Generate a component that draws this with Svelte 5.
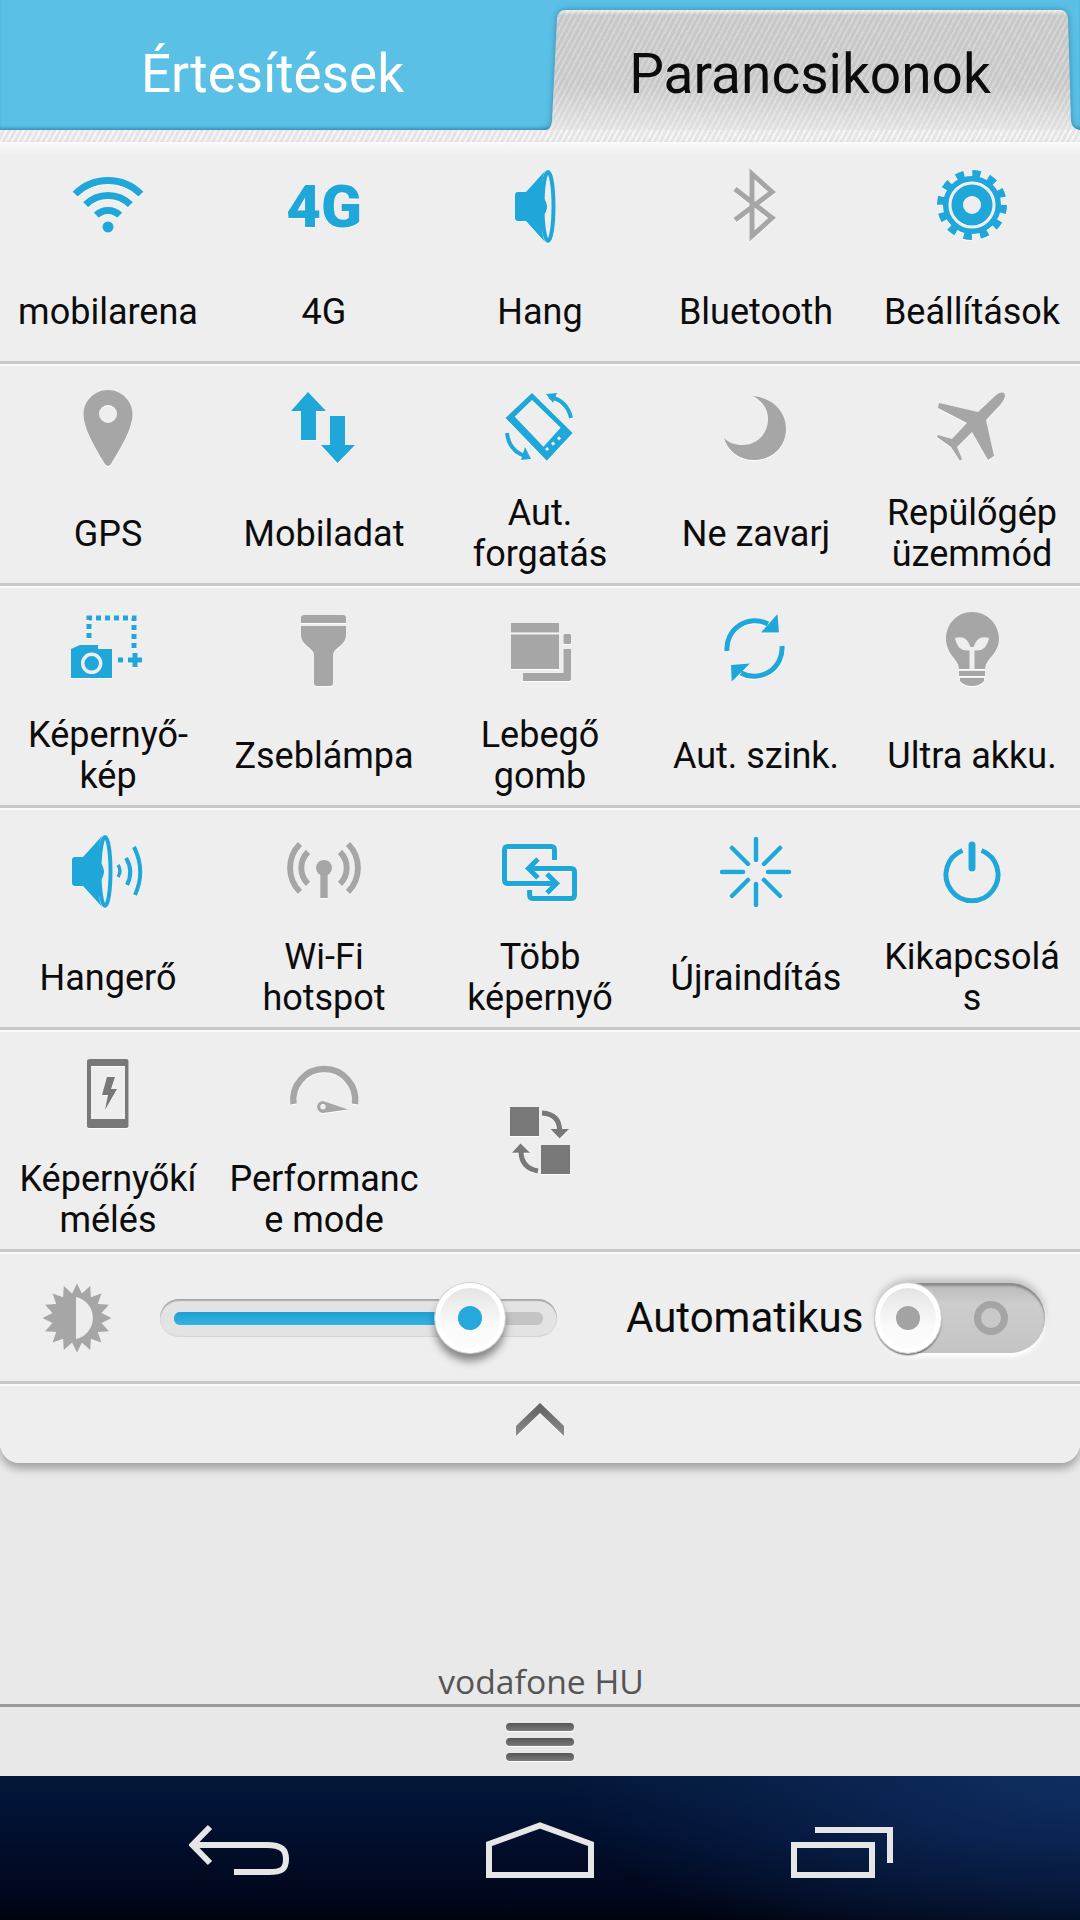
<script>
  // sun spikes for the brightness icon
  const sunPoints = Array.from({ length: 32 }, (_, i) => {
    const r = i % 2 ? 25 : 34.5;
    const a = (i * Math.PI) / 16 - Math.PI / 2;
    return `${(34 + r * Math.cos(a)).toFixed(1)},${(35 + r * Math.sin(a)).toFixed(1)}`;
  }).join(' ');

  const rows = [
    [
      { label: 'mobilarena', icon: wifi },
      { label: '4G', icon: fourG },
      { label: 'Hang', icon: sound },
      { label: 'Bluetooth', icon: bluetooth },
      { label: 'Beállítások', icon: gear }
    ],
    [
      { label: 'GPS', icon: pin },
      { label: 'Mobiladat', icon: data },
      { label: 'Aut.\nforgatás', icon: rotate },
      { label: 'Ne zavarj', icon: moon },
      { label: 'Repülőgép\nüzemmód', icon: plane }
    ],
    [
      { label: 'Képernyő-\nkép', icon: shot },
      { label: 'Zseblámpa', icon: torch },
      { label: 'Lebegő\ngomb', icon: floating },
      { label: 'Aut. szink.', icon: sync },
      { label: 'Ultra akku.', icon: bulb }
    ],
    [
      { label: 'Hangerő', icon: volume },
      { label: 'Wi-Fi\nhotspot', icon: hotspot },
      { label: 'Több\nképernyő', icon: multi },
      { label: 'Újraindítás', icon: restart },
      { label: 'Kikapcsolá\ns', icon: power }
    ],
    [
      { label: 'Képernyőkí\nmélés', icon: saver },
      { label: 'Performanc\ne mode', icon: gauge },
      { label: '', icon: swap }
    ]
  ];
</script>

{#snippet wifi()}
  <g class="sb" stroke-width="7">
    <path d="M7.1 29.1A46.5 46.5 0 0 1 72.9 29.1" />
    <path d="M17.7 39.7A31.5 31.5 0 0 1 62.3 39.7" />
    <path d="M28.3 50.3A16.5 16.5 0 0 1 51.7 50.3" />
  </g>
  <circle class="b" cx="40" cy="62" r="5.5" />
{/snippet}

{#snippet fourG()}
  <text class="b four" x="40" y="62" text-anchor="middle">4G</text>
{/snippet}

{#snippet speakerShape()}
  <path class="b" d="M18 27H26L45 6C41 15 42 28 43 32Q47 37 47 42Q47 47 43 51C42 60 41 68 45 77L26 56H18Q15 56 15 53V30Q15 27 18 27Z" />
  <ellipse class="sb" cx="48" cy="41.5" rx="5.5" ry="34.5" stroke-width="4" />
{/snippet}

{#snippet sound()}
  {@render speakerShape()}
{/snippet}

{#snippet bluetooth()}
  <path class="sg" stroke-width="5" d="M19 24L56 53L36 71V9L56 27L19 55" />
{/snippet}

{#snippet gear()}
  <g class="sb">
    <circle cx="40" cy="40" r="31.5" stroke-width="7" stroke-dasharray="8.25 8.25" />
    <circle cx="40" cy="40" r="26.3" stroke-width="5.5" />
    <circle cx="40" cy="40" r="14.75" stroke-width="11.5" />
  </g>
{/snippet}

{#snippet pin()}
  <path class="g" fill-rule="evenodd" d="M40 3C53.5 3 64.5 14 64.5 27.5C64.5 44 47 70 43 77Q40 81 37 77C33 70 15.5 44 15.5 27.5C15.5 14 26.5 3 40 3ZM40 18A9 9 0 1 0 40 36A9 9 0 1 0 40 18Z" />
{/snippet}

{#snippet data()}
  <path class="b" d="M24 5L42 24H32V53H17V24H7Z" />
  <path class="b" d="M46 29H61V58H71L53.5 76L37 58H46Z" />
{/snippet}

{#snippet rotate()}
  <path class="b" fill-rule="evenodd" d="M32 6L72.6 46L46.8 73.7L5.5 31ZM32 13L14.8 29.7L43.4 59.7L60.6 40.7Z" />
  <path class="dots" d="M46 63L64 47" stroke-width="3" stroke-dasharray="3 5" />
  <path class="sb" stroke-width="4" d="M49 10Q67 13 71 31" />
  <path class="b" d="M46 7L57 6L53 16Z" />
  <path class="sb" stroke-width="4" d="M7 46Q9 65 28 70" />
  <path class="b" d="M25 60L31 72L21 73Z" />
{/snippet}

{#snippet moon()}
  <path class="g" d="M37 9C56 11 70 24 70 42C70 60 56 73 38 73C24 73 12 65 8 51C13 56 20 58 26 58C41 58 52 47 52 32C52 22 46 14 37 9Z" />
{/snippet}

{#snippet plane()}
  <path class="g" d="M61 11Q68 4 72 6Q75 9 69 17L54 33L62 69L56 73L40 45L25 60L30 72L28 74L19 60L5 50L6 48L20 52L35 36L6 21L7 16L46 25Z" />
{/snippet}

{#snippet shot()}
  <path class="sb" stroke-width="5" stroke-dasharray="5 4" d="M21 29V9H66V41" />
  <path class="sb" stroke-width="5" d="M50 51H55M60 51H74M67 44V58" />
  <path class="b" d="M3 40L12 36H17L19 36H30V40H44V69H3Z" />
  <circle class="hole-ring" cx="23.7" cy="54.3" r="9" stroke-width="3.5" />
{/snippet}

{#snippet torch()}
  <path class="g" d="M17 14V9Q17 6 20 6H59Q62 6 62 9V14Z" />
  <path class="g" d="M17 17H62V26Q62 32 56 37Q49 42 49 46V74Q49 77 46 77H33Q30 77 30 74V46Q30 42 23 37Q17 32 17 26Z" />
{/snippet}

{#snippet floating()}
  <rect class="g" x="11" y="14" width="48" height="9.5" />
  <rect class="g" x="11" y="25.5" width="48" height="34.5" />
  <rect class="g" x="63.5" y="25" width="7.5" height="10" rx="1.5" />
  <path class="g" d="M63.5 40H71V70Q71 72 69 72H23V64H63.5Z" />
{/snippet}

{#snippet sync()}
  <path class="sb" stroke-width="5" d="M11 42A28 28 0 0 1 52 15" />
  <path class="b" d="M61.5 5L63 23.5L45 23.5Z" />
  <path class="sb" stroke-width="5" d="M66 37A28 28 0 0 1 25 64" />
  <path class="b" d="M15.7 72.7L15 56L34 54.5Z" />
{/snippet}

{#snippet bulb()}
  <path class="g" d="M40 3C55 3 67 15 67 30C67 40 60 47 56 52Q53 56 53 60H27Q27 56 24 52C20 47 14 40 14 30C14 15 25 3 40 3Z" />
  <rect class="g" x="27" y="62" width="26" height="5" />
  <path class="g" d="M28 69H52V72Q48 77 40 77Q32 77 28 72Z" />
  <path class="bgfill" d="M23 29Q36 25 39 41Q26 44 23 29Z" />
  <path class="bgfill" d="M57 29Q44 25 41 41Q54 44 57 29Z" />
  <rect class="bgfill" x="37.5" y="38" width="5" height="22" />
{/snippet}

{#snippet volume()}
  <g transform="translate(-11 -1)">{@render speakerShape()}</g>
  <g class="sb">
    <path stroke-width="3.5" d="M50 34Q54 40 50 46" />
    <path stroke-width="4" d="M58 27Q66 40 59 54" />
    <path stroke-width="4" d="M66 16Q78 40 67 64" />
  </g>
{/snippet}

{#snippet hotspot()}
  <g class="sg" stroke-width="6">
    <path d="M16 13A34 34 0 0 0 16 61" />
    <path d="M64 13A34 34 0 0 1 64 61" />
    <path d="M24 21A22.5 22.5 0 0 0 24 53" />
    <path d="M56 21A22.5 22.5 0 0 1 56 53" />
  </g>
  <circle class="g" cx="40" cy="37" r="8" />
  <rect class="g" x="36.3" y="40" width="7.4" height="27" />
{/snippet}

{#snippet multi()}
  <g class="sb" stroke-width="5">
    <path d="M54.5 29V19Q54.5 15.5 51 15.5H8Q4.5 15.5 4.5 19V49Q4.5 52.5 8 52.5H56" />
    <path d="M29.6 59V64Q29.6 67.5 33 67.5H71Q74.5 67.5 74.5 64V41Q74.5 37.5 71 37.5H30" />
    <path d="M38 28L28.5 37.5L38 47" />
    <path d="M47 43L56.5 52.5L47 62" />
  </g>
{/snippet}

{#snippet restart()}
  <g class="sb round" stroke-width="4.5">
    <path d="M40 8V29M40 53V74M6 41H27M52 41H73" />
    <path d="M16 17L32 33M64 17L48 33M16 65L32 49M64 65L48 49" />
  </g>
{/snippet}

{#snippet power()}
  <path class="sb" stroke-width="5" d="M30.5 19.5A26 26 0 1 0 49.5 19.5" />
  <path class="sb round" stroke-width="7" d="M40 14V37" />
{/snippet}

{#snippet saver()}
  <path class="d" fill-rule="evenodd" d="M22 6H58Q60.5 6 60.5 8V73Q60.5 75 58 75H22Q19 75 19 73V8Q19 6 22 6ZM23 13V66H57V13Z" />
  <path class="d" d="M39 24H47L43 36H49L37 57L40 42H34Z" />
{/snippet}

{#snippet gauge()}
  <path class="sg" stroke-width="6.5" d="M9.5 51A31 31 0 1 1 71 51" />
  <path class="g" fill-rule="evenodd" d="M39 48L64 56.5L39 60A6 6 0 0 1 39 48ZM39 51A2.7 2.7 0 1 0 39 56.4A2.7 2.7 0 1 0 39 51Z" />
{/snippet}

{#snippet swap()}
  <rect class="d" x="10" y="6" width="29" height="29" />
  <rect class="d" x="41" y="44" width="29" height="29" />
  <path class="sd" stroke-width="5" d="M42 12Q59 13 59.6 29" />
  <path class="d" d="M50.5 28H69L59.6 37.5Z" />
  <path class="sd" stroke-width="5" d="M21 50Q21 67 38 70" />
  <path class="d" d="M12 51.7H30L20.5 42.5Z" />
{/snippet}

<div class="page">
  <header class="tabs">
    <div class="tab tab-plain">Értesítések</div>
    <div class="tab-shadow">
      <div class="tab tab-active">Parancsikonok</div>
    </div>
  </header>
  <div class="tab-strip"></div>

  <section class="panel">
    {#each rows as row}
      <div class="row">
        {#each row as item}
          <div class="cell" class:only-icon={!item.label}>
            <svg class="ico" width="80" height="80" viewBox="0 0 80 80">{@render item.icon()}</svg>
            {#if item.label}
              <div class="label"><span>{item.label}</span></div>
            {/if}
          </div>
        {/each}
      </div>
    {/each}

    <div class="bright">
      <svg class="sun" width="68" height="70" viewBox="0 0 68 70">
        <polygon class="g" points={sunPoints} />
        <path class="bgfill" d="M33 14A21.5 21.5 0 0 1 33 56Z" />
      </svg>
      <div class="track">
        <div class="bar"><div class="bar-fill"></div></div>
        <div class="thumb slider-thumb"><span class="dot dot-blue"></span></div>
      </div>
      <div class="auto">Automatikus</div>
      <div class="toggle">
        <div class="thumb toggle-thumb"><span class="dot dot-gray"></span></div>
        <span class="ring"></span>
      </div>
    </div>

    <div class="expand">
      <svg class="ico" width="48" height="34" viewBox="0 0 48 34">
        <defs>
          <linearGradient id="chev" x1="0" y1="0" x2="0" y2="1">
            <stop offset="0" stop-color="#5f5f5f" />
            <stop offset="1" stop-color="#8c8c8c" />
          </linearGradient>
        </defs>
        <path fill="url(#chev)" d="M24 0L48 23V33L24 10L0 33V23Z" />
      </svg>
    </div>
  </section>

  <div class="carrier">vodafone HU</div>

  <div class="handle">
    <span></span>
    <span></span>
    <span></span>
  </div>

  <nav class="nav">
    <svg width="100" height="56" viewBox="0 0 100 56">
      <path d="M21 5L3.5 23L21 41M4 23H78C93 23 97 28 97 37C97 48 92 50 80 50H45" />
    </svg>
    <svg width="108" height="56" viewBox="0 0 108 56">
      <path d="M3 22L54 3.5L105 22V53H3Z" />
    </svg>
    <svg width="102" height="56" viewBox="0 0 102 56">
      <rect x="3" y="23" width="78" height="30" />
      <path d="M24 8H99V41" />
    </svg>
  </nav>
</div>

<style>
  :global(body) {
    margin: 0;
    background: #e9e9e9;
  }

  .page {
    width: 1080px;
    height: 1920px;
    display: flex;
    flex-direction: column;
    overflow: hidden;
    background: #e9e9e9;
    font-family: Roboto, "Noto Sans", sans-serif;
    color: #0c0c0c;
  }

  /* tabs */
  .tabs {
    display: flex;
    height: 130px;
    overflow: hidden;
    background: #5bc0e6;
    box-shadow: inset 0 -3px 3px -1px rgba(20, 110, 150, 0.55);
  }

  .tab {
    display: flex;
    align-items: center;
    justify-content: center;
  }

  .tab-plain {
    width: 545px;
    height: 130px;
    padding-top: 18px;
    box-sizing: border-box;
    font-size: 53px;
    color: #fff;
  }

  .tab-shadow {
    width: 535px;
    margin-top: 10px;
    height: 126px;
    filter: drop-shadow(0 0 3px rgba(20, 100, 140, 0.6));
  }

  .tab-active {
    height: 126px;
    padding: 2px 5px 0 0;
    box-sizing: border-box;
    font-size: 55px;
    clip-path: path("M0 120Q6 120 7 111L12 8Q13 0 21 0H515Q522 0 523 8L526 111Q527 119 535 120V126H0Z");
    background:
      repeating-linear-gradient(118deg, rgba(255, 255, 255, 0.16) 0 2px, rgba(0, 0, 0, 0.03) 2px 5px),
      linear-gradient(#f4f4f4 0, #cdcdcd 5px, #cfcfcf 60%, #ececec 100%);
  }

  .tab-strip {
    height: 12px;
    background:
      repeating-linear-gradient(118deg, rgba(255, 255, 255, 0.5) 0 2px, rgba(0, 0, 0, 0.03) 2px 5px),
      #ececec;
  }

  /* quick settings panel */
  .panel {
    padding-top: 2px;
    background: #fafafa;
    border-radius: 0 0 20px 20px;
    overflow: hidden;
    box-shadow: 0 6px 8px rgba(0, 0, 0, 0.3);
    position: relative;
  }

  .row {
    display: grid;
    grid-template-columns: repeat(5, 216px);
    height: 220px;
    box-sizing: border-box;
    margin-bottom: 2px;
    background: #eeeeee;
    border-bottom: 3px solid #c8c8c8;
  }

  .row:first-child {
    background: linear-gradient(#f8f8f8, #eeeeee 12px);
  }

  .cell {
    display: flex;
    flex-direction: column;
    align-items: center;
    padding-top: 21px;
  }

  .cell.only-icon {
    justify-content: center;
    padding-top: 0;
    height: 217px;
  }

  .ico {
    display: block;
    filter: drop-shadow(0 1.5px 0 rgba(255, 255, 255, 0.9));
  }

  .label {
    height: 90px;
    margin-top: 22px;
    display: flex;
    align-items: center;
    justify-content: center;
    text-align: center;
    font-size: 36px;
    line-height: 41px;
    white-space: pre;
  }

  /* svg paint classes */
  .b { fill: #1fa7da; }
  .g { fill: #a6a6a6; }
  .d { fill: #787878; }
  .bgfill { fill: #eeeeee; }
  .sb, .sb path, .sb circle { fill: none; stroke: #1fa7da; }
  .sg, .sg path { fill: none; stroke: #a6a6a6; }
  .sd { fill: none; stroke: #787878; }
  .round, .round path { stroke-linecap: round; }
  .dots { fill: none; stroke: #eeeeee; }
  .hole-ring { fill: #1fa7da; stroke: #eeeeee; }
  .four {
    font-family: Roboto, sans-serif;
    font-weight: 900;
    font-size: 60px;
  }

  /* brightness row */
  .bright {
    display: flex;
    align-items: center;
    height: 130px;
    box-sizing: border-box;
    margin-bottom: 2px;
    padding-left: 43px;
    background: #eeeeee;
    border-bottom: 3px solid #c8c8c8;
  }

  .sun {
    flex: none;
  }

  .track {
    position: relative;
    flex: none;
    width: 397px;
    height: 38px;
    margin-left: 49px;
    padding: 13px 14px 12px;
    box-sizing: border-box;
    border-radius: 19px;
    background: #e3e3e3;
    box-shadow: inset 0 2px 1px #a9a9a9, inset 0 -1px 1px #d4d4d4;
  }

  .bar {
    height: 13px;
    border-radius: 6px;
    background: #c4c4c4;
    overflow: hidden;
  }

  .bar-fill {
    width: 300px;
    height: 13px;
    background: linear-gradient(#1f9fd2, #35b3e2);
  }

  .thumb {
    position: absolute;
    display: flex;
    align-items: center;
    justify-content: center;
    box-sizing: border-box;
    border-radius: 50%;
    border: 5px solid #ffffff;
    background: linear-gradient(#e4e4e4, #fbfbfb 65%);
  }

  .slider-thumb {
    left: 275px;
    top: -16px;
    width: 70px;
    height: 70px;
    box-shadow: 0 0 0 1px #d0d0d0, 0 8px 8px rgba(0, 0, 0, 0.45);
  }

  .dot {
    width: 24px;
    height: 24px;
    border-radius: 50%;
  }

  .dot-blue { background: #27a8dc; }
  .dot-gray { background: #a3a3a3; }

  .auto {
    flex: none;
    width: 236px;
    margin-left: 69px;
    font-size: 42px;
    white-space: nowrap;
  }

  .toggle {
    position: relative;
    flex: none;
    display: flex;
    align-items: center;
    width: 170px;
    height: 70px;
    margin-left: 13px;
    border-radius: 35px;
    background: linear-gradient(#b9b9b9, #cdcdcd 30%, #c4c4c4);
    box-shadow: inset 0 3px 2px #8c8c8c, 0 4px 5px #ffffff, 0 -5px 6px #c4c4c4;
  }

  .toggle-thumb {
    left: 0;
    top: 0;
    width: 66px;
    height: 70px;
    box-shadow: 0 0 0 1px #cfcfcf, 0 2px 2px rgba(0, 0, 0, 0.7);
  }

  .ring {
    width: 34px;
    height: 34px;
    margin-left: 99px;
    box-sizing: border-box;
    border-radius: 50%;
    border: 7px solid #a5a5a5;
    background: #c9c9c9;
  }

  .expand {
    display: flex;
    justify-content: center;
    height: 77px;
    box-sizing: border-box;
    padding-top: 17px;
    background: #eeeeee;
  }

  /* carrier label */
  .carrier {
    flex: 1;
    display: flex;
    align-items: flex-end;
    justify-content: center;
    padding: 0 0 3px 2px;
    font-family: "Open Sans", sans-serif;
    font-size: 33.7px;
    line-height: 40px;
    color: #555555;
    background: #e9e9e9;
  }

  .handle {
    display: flex;
    flex-direction: column;
    align-items: center;
    justify-content: center;
    gap: 7px;
    height: 72px;
    box-sizing: border-box;
    border-top: 3px solid #999999;
    background: #e8e8e8;
  }

  .handle span {
    width: 68px;
    height: 8px;
    border-radius: 4px;
    background: linear-gradient(#555555, #7b7b7b);
    box-shadow: 0 1px 0 #ffffff;
  }

  /* navigation bar */
  .nav {
    display: flex;
    gap: 197px;
    height: 144px;
    box-sizing: border-box;
    padding: 46px 0 0 189px;
    background:
      radial-gradient(ellipse 520px 200px at 100% 0, #0f2e62, rgba(15, 46, 98, 0)),
      linear-gradient(#03183a, #010f2e 40%, #01071c 85%, #00040f);
  }

  .nav svg {
    flex: none;
    fill: none;
    stroke: #e6e6e6;
    stroke-width: 6;
  }
</style>
